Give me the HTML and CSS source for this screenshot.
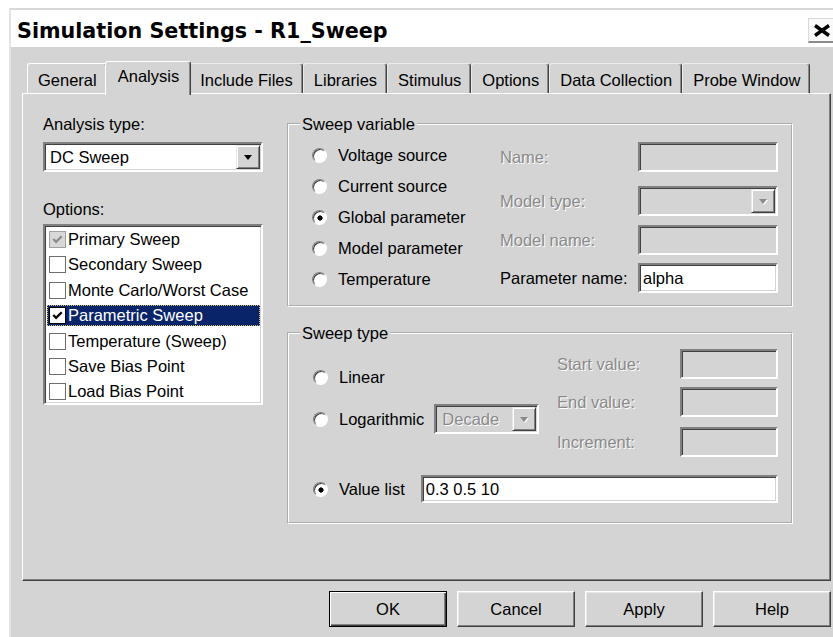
FILE: index.html
```html
<!DOCTYPE html>
<html lang="en">
<head>
<meta charset="utf-8">
<title>Simulation Settings - R1_Sweep</title>
<link rel="stylesheet" href="styles.css">
</head>
<body>
<div class="window">
  <div class="titlebar">
    <span class="title">Simulation Settings - R1_Sweep</span>
    <span class="close" title="Close">
      <svg width="20" height="13" viewBox="0 0 20 13"><path d="M3 1.5 L17 11.5 M17 1.5 L3 11.5" stroke="#000" stroke-width="3.4" fill="none"/></svg>
    </span>
  </div>

  <div class="client">
    <div class="tabs">
      <div class="tab tab-first">General</div>
      <div class="tab tab-active">Analysis</div>
      <div class="tab">Include Files</div>
      <div class="tab">Libraries</div>
      <div class="tab">Stimulus</div>
      <div class="tab">Options</div>
      <div class="tab">Data Collection</div>
      <div class="tab">Probe Window</div>
    </div>

    <div class="panel">
      <div class="col-left">
        <div class="lbl">Analysis type:</div>
        <div class="field combo combo-type">
          <span class="val">DC Sweep</span>
          <span class="drop"><span class="tri"></span></span>
        </div>
        <div class="lbl lbl-options">Options:</div>
        <ul class="listbox">
          <li class="item"><span class="chk chk-grey"><svg viewBox="0 0 16 16"><path d="M3.5 7.5 L6.5 10.5 L12.5 4.5"/></svg></span>Primary Sweep</li>
          <li class="item"><span class="chk"></span>Secondary Sweep</li>
          <li class="item"><span class="chk"></span>Monte Carlo/Worst Case</li>
          <li class="item item-sel"><span class="chk chk-on"><svg viewBox="0 0 16 16"><path d="M3.5 7.5 L6.5 10.5 L12.5 4.5"/></svg></span>Parametric Sweep</li>
          <li class="item"><span class="chk"></span>Temperature (Sweep)</li>
          <li class="item"><span class="chk"></span>Save Bias Point</li>
          <li class="item"><span class="chk"></span>Load Bias Point</li>
        </ul>
      </div>

      <div class="col-right">
        <fieldset class="group group-var">
          <legend>Sweep variable</legend>
          <div class="grp-body var-body">
            <div class="radios">
              <div class="radio-row"><span class="radio"></span>Voltage source</div>
              <div class="radio-row"><span class="radio"></span>Current source</div>
              <div class="radio-row"><span class="radio radio-on"></span>Global parameter</div>
              <div class="radio-row"><span class="radio"></span>Model parameter</div>
              <div class="radio-row"><span class="radio"></span>Temperature</div>
            </div>
            <div class="var-fields">
              <div class="vf-row vf-name"><span class="dim">Name:</span><span class="field field-off vf-input"></span></div>
              <div class="vf-row vf-mtype"><span class="dim">Model type:</span><span class="field field-off combo vf-input"><span class="val"></span><span class="drop"><span class="tri tri-off"></span></span></span></div>
              <div class="vf-row vf-mname"><span class="dim">Model name:</span><span class="field field-off vf-input"></span></div>
              <div class="vf-row vf-pname"><span>Parameter name:</span><span class="field vf-input"><span class="val">alpha</span></span></div>
            </div>
          </div>
        </fieldset>

        <fieldset class="group group-type">
          <legend>Sweep type</legend>
          <div class="grp-body type-body">
            <div class="st-top">
              <div class="st-radios">
                <div class="radio-row st-linear"><span class="radio"></span>Linear</div>
                <div class="radio-row st-log"><span class="radio"></span>Logarithmic
                  <span class="field field-off combo combo-decade"><span class="val dim">Decade</span><span class="drop"><span class="tri tri-off"></span></span></span>
                </div>
              </div>
              <div class="st-range">
                <div class="rg-row"><span class="dim">Start value:</span><span class="field field-off rg-input"></span></div>
                <div class="rg-row rg-end"><span class="dim">End value:</span><span class="field field-off rg-input"></span></div>
                <div class="rg-row rg-inc"><span class="dim">Increment:</span><span class="field field-off rg-input"></span></div>
              </div>
            </div>
            <div class="radio-row st-list"><span class="radio radio-on"></span>Value list
              <span class="field list-input"><span class="val">0.3 0.5 10</span></span>
            </div>
          </div>
        </fieldset>
      </div>
    </div>

    <div class="buttons">
      <span class="btn btn-default">OK</span>
      <span class="btn">Cancel</span>
      <span class="btn">Apply</span>
      <span class="btn">Help</span>
    </div>
  </div>
</div>
</body>
</html>
```

FILE: styles.css
```css
html, body {
  margin: 0;
  padding: 0;
  background: #ffffff;
  overflow: hidden;
}

body {
  font-family: "Liberation Sans", Arial, sans-serif;
  font-size: 16.5px;
  color: #000;
}

/* ---------- window frame ---------- */
.window {
  margin: 8px 0 0 9px;
  width: 832px;
  border-top: 2px solid #d8d8d8;
  border-left: 2px solid #e4e4e4;
}

.titlebar {
  box-sizing: border-box;
  height: 37px;
  padding: 4px 8px 0 6px;
  background: #ffffff;
  display: flex;
  align-items: center;
  justify-content: space-between;
}

.title {
  font-family: "DejaVu Sans", Verdana, sans-serif;
  font-weight: bold;
  font-size: 20.7px;
  line-height: normal;
}

.close {
  box-sizing: border-box;
  width: 27px;
  height: 25px;
  display: flex;
  align-items: center;
  justify-content: center;
  background: #fafafa;
  border-top: 1px solid #dadada;
  border-left: 1px solid #dadada;
  border-right: 1px solid #a0a0a0;
  border-bottom: 2px solid #8a8a8a;
}

.client {
  background: #d4d4d4;
  padding: 14px 12px 20px 11px;
}

/* ---------- tab strip ---------- */
.tabs {
  display: flex;
  align-items: flex-end;
  height: 32px;
  padding-left: 5px;
}

.tab {
  box-sizing: border-box;
  height: 30px;
  padding: 4px 9px 0 10px;
  line-height: 24px;
  white-space: nowrap;
  border-top: 1px solid #ececec;
  border-left: 1px solid #ececec;
  border-right: 1px solid #404040;
  box-shadow: inset -1px 0 0 #8a8a8a;
  border-radius: 3px 3px 0 0;
}

.tab-first {
  border-left-color: #ffffff;
  border-top-color: #ffffff;
}

.tab-active {
  position: relative;
  z-index: 1;
  height: 34px;
  margin: 0 -2px -2px;
  padding: 2px 11px 0 12px;
  background: #d4d4d4;
  border-top-color: #ffffff;
  border-left-color: #ffffff;
}

/* ---------- page panel ---------- */
.panel {
  box-sizing: border-box;
  height: 488px;
  border: 1px solid;
  border-color: #ffffff #404040 #404040 #ffffff;
  box-shadow: inset -1px -1px 0 #808080;
  padding: 20px 0 0 20px;
  display: flex;
  gap: 24px;
}

.col-left {
  width: 220px;
  flex: none;
}

.col-right {
  width: 506px;
  flex: none;
}

.lbl {
  line-height: 20px;
  height: 20px;
}

.lbl-options {
  margin-top: 27px;
}

/* ---------- sunken edit fields ---------- */
.field {
  box-sizing: border-box;
  height: 30px;
  display: flex;
  align-items: center;
  border: 2px solid;
  border-color: #808080 #ffffff #ffffff #808080;
  box-shadow: inset 1px 1px 0 #404040, inset -1px -1px 0 #d4d4d4;
  background: #ffffff;
  padding-left: 3px;
  white-space: nowrap;
}

.field-off {
  background: #d4d4d4;
}

.combo {
  padding: 0 1px 0 5px;
}

.combo .val {
  flex: 1;
}

.combo-type {
  margin-top: 8px;
}

.drop {
  box-sizing: border-box;
  width: 24px;
  height: 24px;
  flex: none;
  display: flex;
  align-items: center;
  justify-content: center;
  background: #d4d4d4;
  border: 1px solid;
  border-color: #e8e8e8 #404040 #404040 #e8e8e8;
  box-shadow: inset 1px 1px 0 #ffffff, inset -1px -1px 0 #808080;
}

.tri {
  width: 0;
  height: 0;
  border-left: 4px solid transparent;
  border-right: 4px solid transparent;
  border-top: 5px solid #000;
}

.tri-off {
  border-top-color: #8a8a8a;
  filter: drop-shadow(1px 1px 0 #ffffff);
}

.dim {
  color: #8a8a8a;
  text-shadow: 1px 1px 0 #ffffff;
}

/* ---------- options list ---------- */
.listbox {
  box-sizing: border-box;
  list-style: none;
  margin: 5px 0 0;
  padding: 3px 0 0;
  width: 220px;
  height: 181px;
  overflow: hidden;
  background: #ffffff;
  border: 2px solid;
  border-color: #808080 #ffffff #ffffff #808080;
  box-shadow: inset 1px 1px 0 #404040, inset -1px -1px 0 #d4d4d4;
}

.item {
  height: 21px;
  line-height: 21px;
  margin: 0 1px 4.4px 2px;
  display: flex;
  align-items: center;
  white-space: nowrap;
}

.item-sel {
  background: #0a246a;
  color: #ffffff;
  outline: 1px dotted #d8c070;
  outline-offset: -1px;
}

.chk {
  box-sizing: border-box;
  width: 17px;
  height: 17px;
  flex: none;
  margin: 0 2px 0 2px;
  border: 1px solid #6e6e6e;
  background: #ffffff;
  display: flex;
}

.chk svg {
  width: 15px;
  height: 15px;
}

.chk path {
  fill: none;
  stroke: #000;
  stroke-width: 2.4;
}

.chk-grey {
  background: #d8d8d8;
  border-color: #a0a0a0;
}

.chk-grey path {
  stroke: #8c8c8c;
}

.chk-on {
  border-color: #000;
}

/* ---------- group boxes ---------- */
.group {
  box-sizing: border-box;
  margin: 0;
  padding: 0;
  min-width: 0;
  width: 506px;
  border: 2px groove #ffffff;
}

.group legend {
  margin-left: 11px;
  padding: 0 2px;
  line-height: 20px;
  height: 20px;
}

.group-type {
  margin-top: 16px;
}

.grp-body {
  padding: 6px 13px 10px 23px;
}

.var-body {
  display: flex;
}

.radios {
  width: 188px;
  flex: none;
}

.radio-row {
  height: 31px;
  display: flex;
  align-items: center;
  white-space: nowrap;
}

.radio {
  box-sizing: border-box;
  width: 15px;
  height: 15px;
  flex: none;
  margin-right: 11px;
  border-radius: 50%;
  border: 1px solid;
  border-color: #808080 #ffffff #ffffff #808080;
  background: #ffffff;
  box-shadow: inset 1px 1px 0 #404040;
}

.radio-on {
  background: radial-gradient(circle at 7px 7px, #000 0 2.3px, #ffffff 2.9px);
}

.var-fields {
  flex: 1;
}

.vf-row {
  display: flex;
  align-items: center;
  justify-content: space-between;
  white-space: nowrap;
}

.vf-name { margin-top: 2px; }
.vf-mtype { margin-top: 14px; }
.vf-mname { margin-top: 9px; }
.vf-pname { margin-top: 8px; }

.vf-input {
  width: 140px;
  flex: none;
}

/* sweep type */
.type-body {
  padding: 6px 13px 19px 24px;
}

.st-top {
  display: flex;
}

.st-radios {
  width: 244px;
  flex: none;
}

.st-radios .radio-row {
  height: 30px;
}

.st-linear { margin-top: 13px; }
.st-log { margin-top: 12px; }

.combo-decade {
  width: 105px;
  margin-left: 10px;
  padding-left: 6px;
}

.st-range {
  flex: 1;
}

.rg-row {
  display: flex;
  align-items: center;
  justify-content: space-between;
  white-space: nowrap;
}

.rg-end { margin-top: 8px; }
.rg-inc { margin-top: 10px; }

.rg-input {
  width: 98px;
  flex: none;
}

.st-list {
  margin-top: 18px;
  height: 28px;
}

.list-input {
  flex: 1;
  height: 28px;
  margin-left: 16px;
}

/* ---------- dialog buttons ---------- */
.buttons {
  display: flex;
  justify-content: flex-end;
  gap: 10px;
  margin-top: 10px;
}

.btn {
  box-sizing: border-box;
  width: 118px;
  height: 36px;
  display: flex;
  align-items: center;
  justify-content: center;
  background: #d4d4d4;
  border: 1px solid;
  border-color: #ffffff #404040 #404040 #ffffff;
  box-shadow: inset -1px -1px 0 #808080, inset 1px 1px 0 #e8e8e8;
}

.btn-default {
  border-color: #000;
  box-shadow: inset 1px 1px 0 #ffffff, inset -1px -1px 0 #404040, inset -2px -2px 0 #808080;
}
```
